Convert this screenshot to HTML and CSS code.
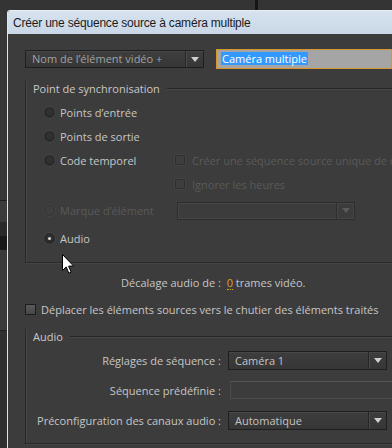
FILE: index.html
```html
<!DOCTYPE html>
<html lang="fr">
<head>
<meta charset="utf-8">
<title>Créer une séquence source à caméra multiple</title>
<link rel="stylesheet" href="styles.css">
</head>
<body>
<div class="screen">
  <div class="topstrip"><div class="topmark"></div></div>
  <div class="main">
    <div class="side">
      <div class="s1"></div><div class="s2"></div><div class="s3"></div><div class="s4"></div><div class="s5"></div><div class="s6"></div><div class="s7"></div>
    </div>
    <div class="dialog">
      <div class="titlebar">Créer une séquence source à caméra multiple</div>
      <div class="body">
        <div class="row1">
          <div class="dd dd-name"><span class="dd-text">Nom de l’élément vidéo +</span><span class="dd-btn"><i class="tri"></i></span></div>
          <div class="tfield"><span class="sel">Caméra multiple</span></div>
        </div>

        <div class="group sync">
          <div class="ghead"><span class="glabel">Point de synchronisation</span><i class="gline"></i></div>
          <div class="sync-grid">
            <div class="opt"><i class="radio"></i><span>Points d’entrée</span></div>
            <div></div>
            <div class="opt"><i class="radio"></i><span>Points de sortie</span></div>
            <div></div>
            <div class="opt"><i class="radio"></i><span>Code temporel</span></div>
            <div class="opt dis clip"><i class="chk"></i><span>Créer une séquence source unique de caméra multiple</span></div>
            <div></div>
            <div class="opt dis"><i class="chk"></i><span>Ignorer les heures</span></div>
            <div class="opt dis"><i class="radio"></i><span>Marque d’élément</span></div>
            <div class="opt"><div class="dd dd-dis"><span class="dd-text"></span><span class="dd-btn"><i class="tri"></i></span></div></div>
            <div class="opt"><i class="radio on"></i><span>Audio</span></div>
            <div></div>
          </div>
        </div>

        <div class="offset">Décalage audio de :&nbsp; <span class="num">0</span> trames vidéo.</div>

        <div class="chkrow"><i class="chk en"></i><span>Déplacer les éléments sources vers le chutier des éléments traités</span></div>

        <div class="group audio">
          <div class="ghead"><span class="glabel">Audio</span><i class="gline"></i></div>
          <div class="audio-grid">
            <span class="alabel">Réglages de séquence :</span>
            <div class="dd dd-a"><span class="dd-text">Caméra 1</span><span class="dd-btn"><i class="tri"></i></span></div>
            <span class="alabel">Séquence prédéfinie :</span>
            <div class="flat"></div>
            <span class="alabel">Préconfiguration des canaux audio :</span>
            <div class="dd dd-a"><span class="dd-text">Automatique</span><span class="dd-btn"><i class="tri"></i></span></div>
          </div>
        </div>
      </div>
    </div>
  </div>
  <svg class="cursor" width="13" height="21" viewBox="0 0 13 21" aria-hidden="true">
    <path d="M0.5 0.5 L0.5 16.5 L4.2 12.9 L6.8 19.2 L9.2 18.2 L6.6 12.1 L11.6 12.1 Z" fill="#ffffff" stroke="#000000" stroke-width="1" stroke-linejoin="round"/>
  </svg>
</div>
</body>
</html>
```
FILE: styles.css
```css
html, body { margin: 0; padding: 0; }
body {
  background: #333333;
  font-family: "Open Sans", "Noto Sans", "DejaVu Sans", sans-serif;
  font-size: 11px;
  color: #c6c6c6;
}
.screen {
  position: relative;
  width: 392px;
  height: 448px;
  overflow: hidden;
  background: #333333;
}
.topstrip {
  height: 10px;
  background: #343434;
  display: flex;
}
.topmark {
  margin-left: 255px;
  width: 3px;
  background: #151515;
}
.main {
  display: flex;
  height: 438px;
}
.side {
  width: 7px;
  flex: none;
  display: flex;
  flex-direction: column;
  background: #353535;
}
.side .s1 { height: 190px; background: #363636; }
.side .s2 { height: 1px; background: #1d1d1d; }
.side .s3 { height: 21px; background: #3b3b3b; }
.side .s4 { height: 14px; background: #2a2a2a; }
.side .s5 { height: 14px; background: #191919; }
.side .s6 { height: 80px; background: #3a3a3a; border-bottom: 1px solid #222; }
.side .s7 { flex: 1; background: #303030; }

.dialog {
  flex: 1;
  min-width: 0;
  border-left: 1px solid #e4e4e4;
  background: #3c3c3c;
  display: flex;
  flex-direction: column;
  border-top-left-radius: 3px;
  overflow: hidden;
}
.titlebar {
  height: 24px;
  flex: none;
  box-sizing: border-box;
  border-top: 1px solid #e8eef5;
  background: linear-gradient(#d6e2ee, #c9d7e6);
  color: #1b1b1b;
  font-family: "Liberation Sans", Arial, sans-serif;
  font-size: 12px;
  line-height: 24px;
  padding-left: 5px;
  white-space: nowrap;
  letter-spacing: -0.2px;
}
.body {
  flex: 1;
  padding: 15px 0 0 17px;
  white-space: nowrap;
}
.row1 {
  display: flex;
  align-items: center;
  height: 20px;
  gap: 12px;
}

/* dropdowns */
.dd {
  display: flex;
  box-sizing: border-box;
  height: 18px;
  border: 1px solid #1f1f1f;
  background: linear-gradient(#3e3e3e, #363636);
  box-shadow: inset 0 1px 0 #474747;
}
.dd-text {
  flex: 1;
  padding-left: 6px;
  line-height: 16px;
  color: #c4c4c4;
  overflow: hidden;
}
.dd-btn {
  width: 17px;
  flex: none;
  border-left: 1px solid #262626;
  box-shadow: inset 1px 0 0 #4a4a4a;
  display: flex;
  align-items: center;
  justify-content: center;
}
.tri {
  width: 0;
  height: 0;
  border-left: 4px solid transparent;
  border-right: 4px solid transparent;
  border-top: 5px solid #cfcfcf;
}
.dd-name { width: 179px; }
.dd-name .dd-text { color: #a2a2a2; }
.tfield {
  flex: 1;
  box-sizing: border-box;
  height: 20px;
  border: 1px solid #d6962e;
  background: #a5a5a5;
  padding: 2px 0 0 4px;
}
.sel {
  display: inline-block;
  background: #3399ff;
  color: #ffffff;
  line-height: 13px;
  height: 13px;
  padding: 0 1px;
  vertical-align: top;
}

/* groups */
.group {
  border-left: 1px solid #282828;
  border-bottom: 1px solid #282828;
  box-shadow: 1px 1px 0 #464646, inset 1px 0 0 #464646;
}
.ghead {
  display: flex;
  align-items: center;
  height: 14px;
  margin-top: -7px;
}
.glabel {
  padding-left: 7px;
  padding-right: 7px;
  color: #c8c8c8;
}
.gline {
  flex: 1;
  height: 1px;
  background: #262626;
  box-shadow: 0 1px 0 #464646;
}
.sync { margin-top: 19px; }
.sync-grid {
  display: grid;
  grid-template-columns: 130px 1fr;
  grid-template-rows: 24px 24px 24px 24px 29px 26px;
  padding: 5px 0 11px 18px;
}
.opt {
  display: flex;
  align-items: center;
  gap: 5px;
  min-width: 0;
}
.opt.clip { overflow: hidden; }
.opt.dis { color: #5a5a5a; }
.radio {
  width: 11px;
  height: 11px;
  box-sizing: border-box;
  border-radius: 50%;
  background: radial-gradient(circle at 50% 40%, #333 0%, #2b2b2b 70%);
  border: 1px solid #2a2a2a;
  box-shadow: 0 0 0 1px #444;
  flex: none;
  display: flex;
  align-items: center;
  justify-content: center;
}
.dis .radio { background: #3e3e3e; border-color: #333; box-shadow: 0 0 0 1px #454545; }
.radio.on::after {
  content: "";
  width: 3px;
  height: 3px;
  border-radius: 50%;
  background: #d8d8d8;
}
.chk {
  width: 10px;
  height: 10px;
  box-sizing: border-box;
  border: 1px solid #2e2e2e;
  background: #3d3d3d;
  box-shadow: 0 0 0 1px #444;
  flex: none;
  margin-left: 1px;
}
.dis .chk { margin-right: 2px; }
.dd-dis {
  margin-left: 3px;
  width: 178px;
  height: 18px;
  border-color: #2e2e2e;
  background: #3c3c3c;
  box-shadow: inset 0 0 0 1px #454545;
}
.dd-dis .dd-btn { border-left-color: #2e2e2e; box-shadow: inset 1px 0 0 #454545; }
.dd-dis .tri { border-top-color: #5a5a5a; }

.offset {
  margin: 12px 0 0 96px;
  line-height: 16px;
  color: #c6c6c6;
}
.num {
  color: #d9a322;
  border-bottom: 1px dotted #d9a322;
  line-height: 12px;
  display: inline-block;
}

.chkrow {
  margin-top: 10px;
  display: flex;
  align-items: center;
  gap: 5px;
  height: 16px;
}
.chk.en {
  width: 11px;
  height: 11px;
  margin-left: 0;
  border: 1px solid #1c1c1c;
  background: linear-gradient(#5a5a5a, #474747);
  box-shadow: none;
}

.audio { margin-top: 19px; }
.audio-grid {
  display: grid;
  grid-template-columns: 195px 1fr;
  grid-auto-rows: 20px;
  row-gap: 10px;
  column-gap: 7px;
  align-items: center;
  padding: 7px 0 13px 0;
}
.alabel { text-align: right; color: #c6c6c6; }
.dd-a { width: 159px; height: 19px; }
.dd-a .dd-text { line-height: 17px; }
.flat {
  margin-left: 2px;
  height: 16px;
  border-top: 1px solid #535353;
  border-bottom: 1px solid #4a4a4a;
  border-left: 1px solid #4a4a4a;
}

.cursor {
  position: absolute;
  left: 62px;
  top: 254px;
}
```
